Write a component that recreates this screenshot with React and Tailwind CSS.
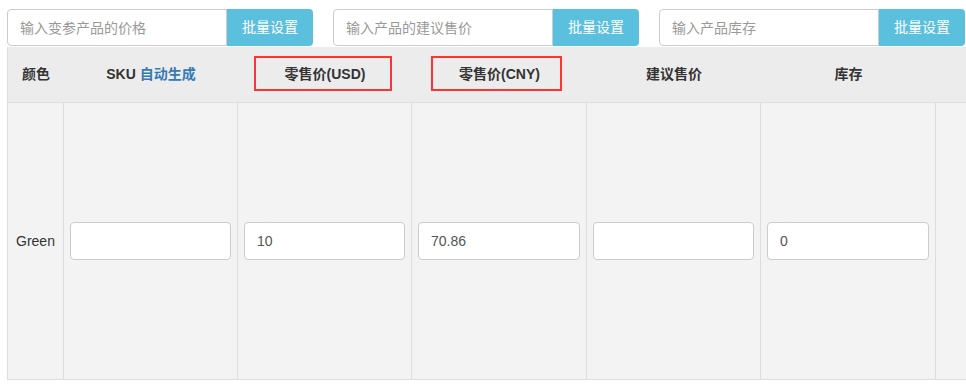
import React from 'react';

const groups = ['输入变参产品的价格', '输入产品的建议售价', '输入产品库存'];

const cols = [
  { w: 'w-[56px]' },
  { w: 'w-[174px]' },
  { w: 'w-[174px]' },
  { w: 'w-[175px]' },
  { w: 'w-[174px]' },
  { w: 'w-[175px]' },
  { w: 'w-[80px]' },
];

const values = ['', '10', '70.86', '', '0'];

function BatchInput({ placeholder }) {
  return (
    <div className="flex h-[37px] w-[306px] shrink-0">
      <input
        placeholder={placeholder}
        className="w-[220px] h-full border border-[#ccc] rounded-l-[4px] px-[12px] text-[14px] text-[#555] placeholder:text-[#999] bg-white outline-none"
      />
      <button className="w-[86px] h-full bg-[#5bc0de] text-white text-[14px] rounded-r-[4px]">
        批量设置
      </button>
    </div>
  );
}

export default function App() {
  return (
    <div className="w-[966px] h-[384px] overflow-hidden bg-white text-[#333] font-['Liberation_Sans','Noto_Sans_CJK_SC',sans-serif]">
      {/* batch setting inputs */}
      <div className="flex gap-5 pl-[7px] pt-[9px]">
        {groups.map((g) => (
          <BatchInput key={g} placeholder={g} />
        ))}
      </div>

      {/* variant table */}
      <div className="ml-[7px] mt-px w-[1020px]">
        <div className="flex h-[56px] bg-[#ececec] border-b border-l border-[#ddd] text-[14px] font-bold">
          <div className={`${cols[0].w} flex items-center justify-center`}>颜色</div>
          <div className={`${cols[1].w} flex items-center justify-center`}>
            SKU&nbsp;<span className="text-[#337ab7]">自动生成</span>
          </div>
          <div className={`${cols[2].w} relative flex items-center justify-center`}>
            零售价(USD)
            <span className="absolute left-[16px] top-[9px] w-[138px] h-[35px] border-2 border-[#f33]" />
          </div>
          <div className={`${cols[3].w} relative flex items-center justify-center`}>
            零售价(CNY)
            <span className="absolute left-[19px] top-[9px] w-[131px] h-[35px] border-2 border-[#f33]" />
          </div>
          <div className={`${cols[4].w} flex items-center justify-center`}>建议售价</div>
          <div className={`${cols[5].w} flex items-center justify-center`}>库存</div>
          <div className={cols[6].w} />
        </div>

        <div className="flex h-[277px] bg-[#f3f3f3] border-b border-[#ddd] text-[14px]">
          <div className={`${cols[0].w} border-l border-[#ddd] flex items-center justify-center`}>Green</div>
          {values.map((v, i) => (
            <div key={i} className={`${cols[i + 1].w} border-l border-[#ddd] flex items-center px-[6px]`}>
              <input
                defaultValue={v}
                className="w-full h-[38px] border border-[#ccc] rounded-[4px] bg-white px-[12px] text-[14px] text-[#555] outline-none"
              />
            </div>
          ))}
          <div className={`${cols[6].w} border-l border-[#ddd]`} />
        </div>
      </div>
    </div>
  );
}
